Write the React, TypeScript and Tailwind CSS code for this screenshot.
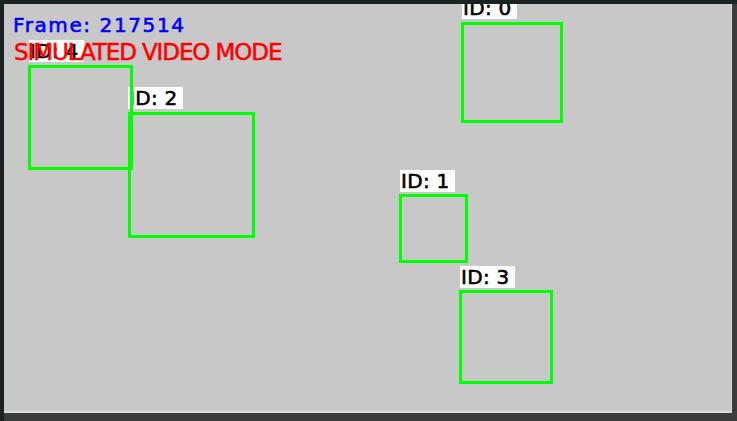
import React from 'react';

interface Track {
  id: number;
  box: string;
  label: string;
}

// ordered as drawn: later boxes sit over earlier labels
const tracks: Track[] = [
  { id: 0, box: 'left-[457px] top-[18px] w-[102px] h-[101px]', label: 'left-[458px] top-[-7px]' },
  { id: 1, box: 'left-[395px] top-[190px] w-[69px] h-[69px]', label: 'left-[396px] top-[166px]' },
  { id: 2, box: 'left-[124px] top-[108px] w-[127px] h-[126px]', label: 'left-[124px] top-[83px]' },
  { id: 3, box: 'left-[455px] top-[286px] w-[94px] h-[94px]', label: 'left-[456px] top-[262px]' },
  { id: 4, box: 'left-[24px] top-[61px] w-[105px] h-[105px]', label: 'left-[25px] top-[36px]' },
];

export default function App(): React.ReactElement {
  return (
    <div className="w-[737px] h-[421px] bg-[#3c3c3c] flex flex-col overflow-hidden font-['DejaVu_Sans',sans-serif]">
      <div className="h-[4px] bg-[#1d2325] shrink-0" />
      <div className="flex flex-1">
        <div className="w-[4px] bg-[#1d2325] shrink-0" />
        <div className="relative w-[728px] h-[409px] bg-[#c8c8c8] border-r border-b-2 border-[#dcdcdc] overflow-hidden">
          {tracks.map(t => (
            <React.Fragment key={t.id}>
              <div className={`absolute ${t.box} border-[3px] border-[#00ff00]`} />
              <div className={`absolute ${t.label} w-[55px] h-[22px] pl-[1px] bg-white text-black text-[20px] leading-[22px] tracking-[0.3px] whitespace-pre [-webkit-text-stroke:0.6px_black]`}>
                {`ID: ${t.id}`}
              </div>
            </React.Fragment>
          ))}
          <div className="absolute left-[9px] top-[11px] text-[20px] leading-[20px] tracking-[1.6px] text-[#0000ff] whitespace-pre [-webkit-text-stroke:0.6px_#0000ff]">
            Frame: 217514
          </div>
          <div className="absolute left-[10px] top-[36px] text-[23px] leading-[24px] tracking-[-1.1px] text-[#ff0000] whitespace-pre [-webkit-text-stroke:0.5px_#ff0000]">
            SIMULATED VIDEO MODE
          </div>
        </div>
      </div>
    </div>
  );
}
